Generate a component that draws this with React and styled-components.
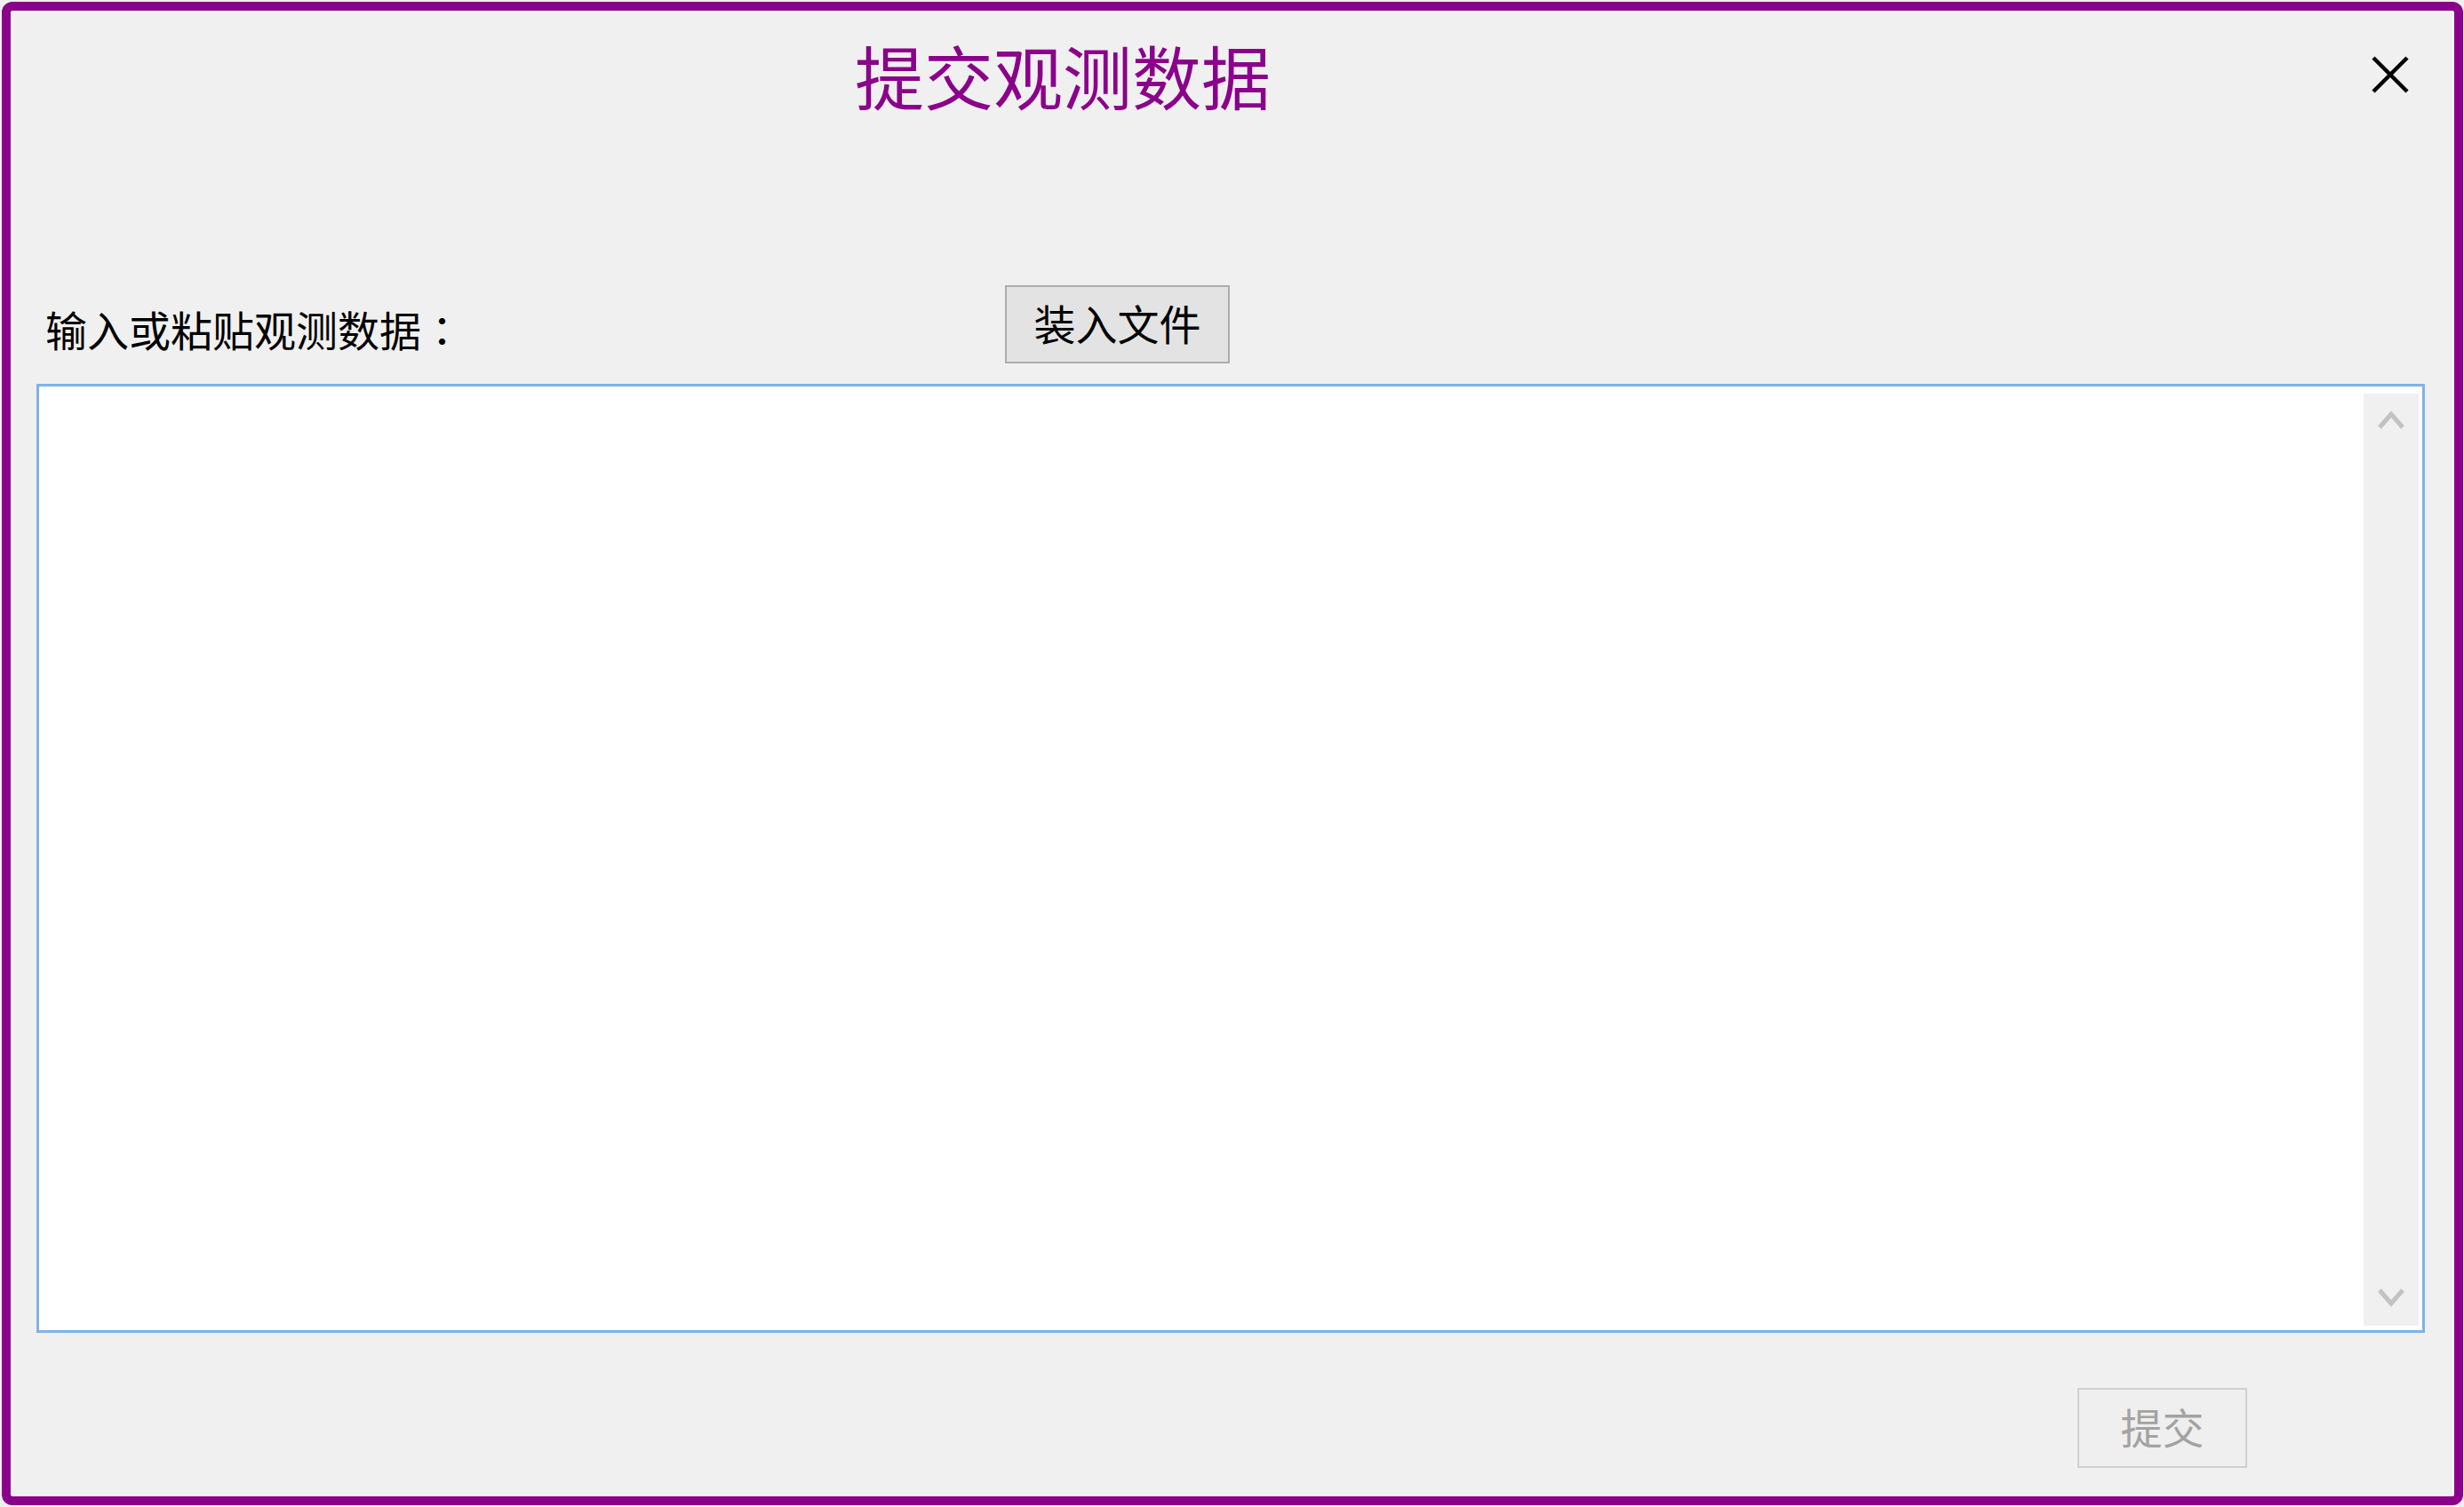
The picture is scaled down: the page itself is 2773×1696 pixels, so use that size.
import React from 'react'
import styled, { createGlobalStyle } from 'styled-components'

const GlobalStyle = createGlobalStyle`
    html, body {
        margin: 0;
        padding: 0;
        background: #f0f0f0;
    }
    body {
        font-family: "Noto Sans CJK SC", "Noto Sans", sans-serif;
    }
`

const Window = styled.div`
    box-sizing: border-box;
    margin: 2px;
    width: 2770px;
    height: 1692px;
    border: 10px solid #8b008b;
    border-radius: 12px;
    background: #f0f0f0;
    box-shadow: inset 0 0 0 2px #fbfbfb;
    display: flex;
    flex-direction: column;
`

const Header = styled.div`
    display: flex;
    align-items: center;
    justify-content: space-between;
    height: 78px;
    padding: 33px 50px 0 950px;
`

const Title = styled.h1`
    margin: 0;
    font-size: 78px;
    line-height: 1;
    font-weight: 400;
    color: #8b008b;
    font-family: "Noto Sans CJK SC", sans-serif;
`

const CloseButton = styled.button`
    border: none;
    background: none;
    padding: 0;
    width: 44px;
    height: 42px;
    display: flex;
    cursor: pointer;
`

const InputRow = styled.div`
    display: grid;
    grid-template-columns: 1080px auto;
    align-items: end;
    margin-top: 198px;
    padding-left: 39px;
`

const Label = styled.label`
    font-size: 47px;
    line-height: 1;
    color: #000;
    margin-bottom: 16px;
`

// full-width colon centred in its cell, as in the original dialog font
const Colon = styled.span`
    font-family: "Noto Sans CJK TC", sans-serif;
`

const Button = styled.button`
    box-sizing: border-box;
    width: ${p => p.$w}px;
    height: ${p => p.$h}px;
    padding: 0 0 5px;
    font-family: "Noto Sans CJK SC", sans-serif;
    font-size: 47px;
    line-height: 1;
    color: ${p => (p.disabled ? '#a3a3a3' : '#000')};
    background: ${p => (p.disabled ? '#efefef' : '#e3e3e3')};
    border: 2px solid ${p => (p.disabled ? '#d0d0d0' : '#adadad')};
    justify-self: start;
`

const TextBox = styled.div`
    box-sizing: border-box;
    display: flex;
    margin: 23px 33px 0 29px;
    height: 1068px;
    border: 3px solid #80b3e6;
    background: #fff;
    padding: 8px 4px 5px 0;
`

const DataInput = styled.textarea`
    flex: 1;
    border: none;
    outline: none;
    resize: none;
    overflow: hidden;
    background: transparent;
    font-family: "Noto Sans CJK SC", sans-serif;
    font-size: 40px;
    padding: 6px 12px;
`

const ScrollTrack = styled.div`
    width: 62px;
    background: #f0f0f0;
    display: flex;
    flex-direction: column;
    justify-content: space-between;
    align-items: center;
    padding: 19px 0 21px;
`

const Footer = styled.div`
    display: flex;
    justify-content: flex-end;
    margin-top: 62px;
    padding-right: 233px;
`

const Chevron = ({ down }) => (
    <svg width="32" height="22" viewBox="0 0 32 22">
        <polyline
            points={down ? '3,3 16,18 29,3' : '3,19 16,4 29,19'}
            fill="none"
            stroke="#c2c2c2"
            strokeWidth="5"
        />
    </svg>
)

export default function App() {
    return (
        <>
            <GlobalStyle />
            <Window>
                <Header>
                    <Title>提交观测数据</Title>
                    <CloseButton aria-label="关闭">
                        <svg width="44" height="42" viewBox="0 0 44 42">
                            <path d="M3 2 L41 40 M41 2 L3 40" stroke="#000" strokeWidth="4.5" fill="none" />
                        </svg>
                    </CloseButton>
                </Header>
                <InputRow>
                    <Label>输入或粘贴观测数据<Colon>：</Colon></Label>
                    <Button $w={253} $h={88}>装入文件</Button>
                </InputRow>
                <TextBox>
                    <DataInput />
                    <ScrollTrack>
                        <Chevron />
                        <Chevron down />
                    </ScrollTrack>
                </TextBox>
                <Footer>
                    <Button $w={191} $h={90} disabled>提交</Button>
                </Footer>
            </Window>
        </>
    )
}
